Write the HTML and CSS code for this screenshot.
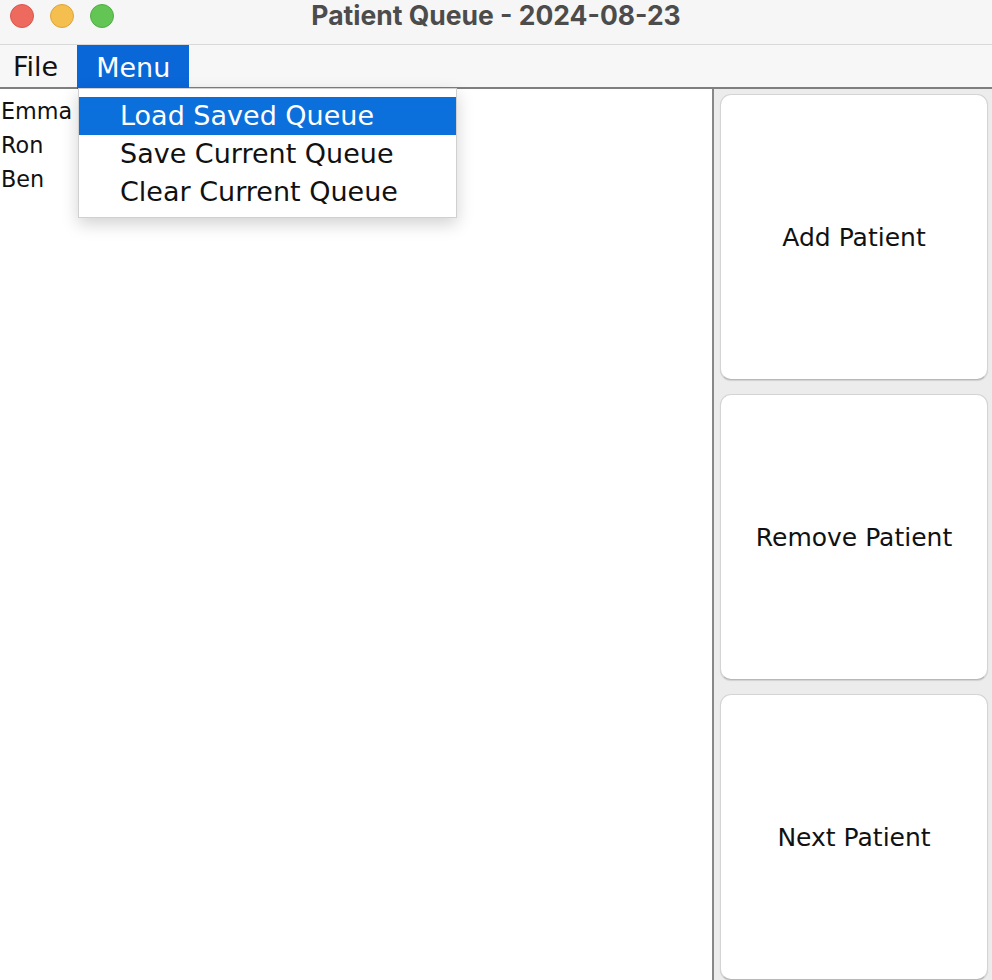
FILE: index.html
```html
<!DOCTYPE html>
<html>
<head>
<meta charset="utf-8">
<link rel="stylesheet" href="styles.css">
</head>
<body>
<div class="window">
  <div class="titlebar">
    <div class="lights">
      <span class="light red"></span>
      <span class="light yellow"></span>
      <span class="light green"></span>
    </div>
    <div class="title">Patient Queue - 2024-08-23</div>
  </div>
  <div class="menubar">
    <div class="menu-item">File</div>
    <div class="menu-item active">Menu</div>
  </div>
  <div class="content">
    <div class="list">
      <div class="list-item">Emma</div>
      <div class="list-item">Ron</div>
      <div class="list-item">Ben</div>
    </div>
    <div class="buttons">
      <div class="btn">Add Patient</div>
      <div class="btn">Remove Patient</div>
      <div class="btn">Next Patient</div>
    </div>
  </div>
  <div class="dropdown">
    <div class="dd-item selected">Load Saved Queue</div>
    <div class="dd-item">Save Current Queue</div>
    <div class="dd-item">Clear Current Queue</div>
  </div>
</div>
</body>
</html>
```
FILE: styles.css
```css
* { box-sizing: border-box; }
html, body { margin: 0; padding: 0; }
body {
  width: 992px;
  height: 980px;
  overflow: hidden;
  font-family: "DejaVu Sans", sans-serif;
  background: #ffffff;
}
.window {
  position: relative;
  width: 992px;
  height: 980px;
  display: flex;
  flex-direction: column;
}
.titlebar {
  height: 45px;
  background: #f6f6f6;
  border-bottom: 1px solid #d9d9d9;
  display: flex;
  align-items: center;
  justify-content: center;
  position: relative;
}
.lights {
  position: absolute;
  left: 10px;
  top: 4px;
  display: flex;
  gap: 16px;
}
.light {
  width: 24px;
  height: 24px;
  border-radius: 50%;
  display: block;
}
.red { background: #ee6a5f; border: 1px solid #d9574d; }
.yellow { background: #f5bf4f; border: 1px solid #dca63a; }
.green { background: #62c554; border: 1px solid #52ad45; }
.title {
  font-family: Inter, "Liberation Sans", sans-serif;
  font-weight: 700;
  font-size: 26.5px;
  color: #4c4c4c;
  margin-top: -14px;
}
.menubar {
  height: 44px;
  background: #f7f7f7;
  border-bottom: 2px solid #7f7f7f;
  display: flex;
  align-items: stretch;
}
.menu-item {
  font-size: 27px;
  color: #111;
  padding: 0 0 0 13px;
  display: flex;
  align-items: center;
}
.menu-item.active {
  background: #0a67d8;
  color: #fff;
  width: 112px;
  padding-left: 19px;
  margin-left: 19px;
  margin-bottom: -2px;
}
.content {
  flex: 1;
  display: flex;
}
.list {
  width: 714px;
  background: #fff;
  border-right: 2px solid #888;
  padding-top: 5px;
}
.list-item {
  font-size: 22.3px;
  height: 34px;
  line-height: 34px;
  padding-left: 1px;
  color: #111;
}
.buttons {
  flex: 1;
  background: #ececec;
  padding: 5px 4px 0 6px;
  display: flex;
  flex-direction: column;
  gap: 14px;
}
.btn {
  height: 286px;
  flex: none;
  background: #fff;
  border: 1px solid #d4d4d4;
  border-bottom-color: #b8b8b8;
  border-radius: 11px;
  box-shadow: 0 1px 1px rgba(0,0,0,0.12);
  display: flex;
  align-items: center;
  justify-content: center;
  font-size: 25px;
  color: #111;
}
.dropdown {
  position: absolute;
  left: 78px;
  top: 88px;
  width: 379px;
  height: 130px;
  background: #fff;
  border: 1px solid #d0d0d0;
  box-shadow: 0 6px 16px rgba(0,0,0,0.18);
  padding-top: 8px;
}
.dd-item {
  height: 38px;
  line-height: 38px;
  padding-left: 41px;
  font-size: 27px;
  color: #111;
}
.dd-item.selected {
  background: #0b6fdc;
  color: #fff;
}
```
